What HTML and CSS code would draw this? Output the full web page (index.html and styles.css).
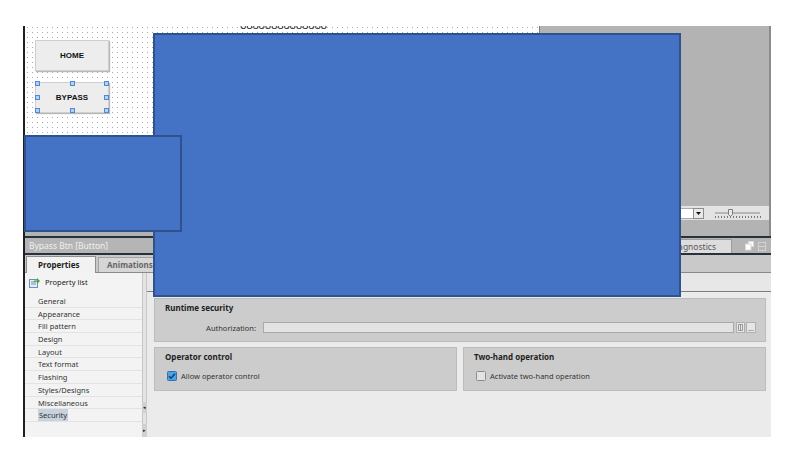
FILE: index.html
```html
<!DOCTYPE html>
<html lang="en">
<head>
    <meta charset="UTF-8">
    <meta name="viewport" content="width=device-width, initial-scale=1.0">
    <link rel="stylesheet" href="styles.css">
    <title>Bypass Btn [Button] - Properties</title>
</head>
<body>

    <div class="app">
        <div class="editor">
            <div class="canvas">
                <span class="cut-label">UUUUUUUUUUUUUU</span>
                <div class="hmi-btn">HOME</div>
                <div class="hmi-btn selected">BYPASS
                    <i class="handle h-tl"></i>
                    <i class="handle h-tm"></i>
                    <i class="handle h-tr"></i>
                    <i class="handle h-ml"></i>
                    <i class="handle h-mr"></i>
                    <i class="handle h-bl"></i>
                    <i class="handle h-bm"></i>
                    <i class="handle h-br"></i>
                </div>
            </div>
            <div class="viewport"></div>
        </div>

        <div class="statusbar">
            <div class="strip">
                <span class="zoom-box"></span>
                <span class="zoom-arrow">
                    <svg width="5" height="3" viewBox="0 0 5 3"><path d="M0 0h5L2.5 3z" fill="#111"/></svg>
                </span>
                <svg class="slider" width="48" height="11" viewBox="0 0 48 11">
                    <line x1="1" y1="5" x2="46" y2="5" stroke="#8a8a8a" stroke-width="1"/>
                    <g stroke="#777" stroke-width="1">
                        <line x1="1.5" y1="8" x2="1.5" y2="10"/><line x1="4.5" y1="8" x2="4.5" y2="10"/>
                        <line x1="7.5" y1="8" x2="7.5" y2="10"/><line x1="10.5" y1="8" x2="10.5" y2="10"/>
                        <line x1="13.5" y1="8" x2="13.5" y2="10"/><line x1="16.5" y1="8" x2="16.5" y2="10"/>
                        <line x1="19.5" y1="8" x2="19.5" y2="10"/><line x1="22.5" y1="8" x2="22.5" y2="10"/>
                        <line x1="25.5" y1="8" x2="25.5" y2="10"/><line x1="28.5" y1="8" x2="28.5" y2="10"/>
                        <line x1="31.5" y1="8" x2="31.5" y2="10"/><line x1="34.5" y1="8" x2="34.5" y2="10"/>
                        <line x1="37.5" y1="8" x2="37.5" y2="10"/><line x1="40.5" y1="8" x2="40.5" y2="10"/>
                        <line x1="43.5" y1="8" x2="43.5" y2="10"/><line x1="46.5" y1="8" x2="46.5" y2="10"/>
                    </g>
                    <path d="M14.5 1.5h4v5l-2 2l-2-2z" fill="#e9e9e9" stroke="#7a7a7a"/>
                </svg>
            </div>
        </div>

        <div class="inspector-head">
            <span class="head-title">Bypass Btn [Button]</span>
            <span class="diag-tab">Diagnostics</span>
            <svg class="win-icons" width="22" height="10" viewBox="0 0 22 10">
                <rect x="3.5" y="0.5" width="5" height="5" fill="#fff" stroke="#d8d8d8"/>
                <rect x="0.5" y="3" width="5.5" height="6" fill="#fff" stroke="#d8d8d8"/>
                <rect x="13.5" y="1.5" width="7" height="8" fill="none" stroke="#d2d2d2"/>
                <line x1="13.5" y1="5.5" x2="20.5" y2="5.5" stroke="#d2d2d2"/>
            </svg>
        </div>

        <div class="tabs">
            <span class="tab active">Properties</span>
            <span class="tab">Animations</span>
        </div>

        <div class="inspector">
            <div class="nav">
                <div class="proplist">
                    <svg width="11" height="11" viewBox="0 0 11 11">
                        <rect x="0.5" y="2.5" width="8" height="8" fill="#e8eef6" stroke="#6d8fb8"/>
                        <line x1="2" y1="5" x2="7" y2="5" stroke="#6d8fb8"/>
                        <line x1="2" y1="7" x2="7" y2="7" stroke="#6d8fb8"/>
                        <path d="M5 3.5h3V1l3 3l-3 3V4.8H5z" fill="#3aa53a"/>
                    </svg>
                    Property list
                </div>
                <ul class="nav-list">
                    <li>General</li>
                    <li>Appearance</li>
                    <li>Fill pattern</li>
                    <li>Design</li>
                    <li>Layout</li>
                    <li>Text format</li>
                    <li>Flashing</li>
                    <li>Styles/Designs</li>
                    <li>Miscellaneous</li>
                    <li><span class="current">Security</span></li>
                </ul>
            </div>

            <div class="splitter">
                <span class="grip grip-a">&#9666;</span>
                <span class="grip grip-b">&#9656;</span>
            </div>

            <div class="content">
                <div class="subbar"></div>
                <div class="groups">
                    <div class="group">
                        <div class="group-title">Runtime security</div>
                        <div class="auth-row">
                            <span class="auth-label">Authorization:</span>
                            <span class="auth-input"></span>
                            <span class="mini-btn">
                                <svg width="5" height="7" viewBox="0 0 5 7"><path d="M0.5 0.5h4v6h-4z M2.5 0.5v6" fill="none" stroke="#9a9a9a"/></svg>
                            </span>
                            <span class="mini-btn wide">...</span>
                        </div>
                    </div>

                    <div class="group-row">
                        <div class="group">
                            <div class="group-title">Operator control</div>
                            <label class="check-row">
                                <svg class="check" width="10" height="10" viewBox="0 0 10 10">
                                    <rect x="0.5" y="0.5" width="9" height="9" rx="1" fill="#4aa3ea" stroke="#3a6ea5"/>
                                    <path d="M2 5.2l2 2l4-4.4" fill="none" stroke="#17406e" stroke-width="1.6"/>
                                </svg>
                                Allow operator control
                            </label>
                        </div>
                        <div class="group">
                            <div class="group-title">Two-hand operation</div>
                            <label class="check-row">
                                <svg class="check" width="10" height="10" viewBox="0 0 10 10">
                                    <rect x="0.5" y="0.5" width="9" height="9" rx="1" fill="#e3e3e3" stroke="#8c8c8c"/>
                                </svg>
                                Activate two-hand operation
                            </label>
                        </div>
                    </div>
                </div>
            </div>
        </div>
    </div>

    <div class="shape shape-big"></div>
    <div class="shape shape-small"></div>

</body>
</html>
```

FILE: styles.css
```css
* {
    box-sizing: border-box;
}

body {
    margin: 0;
    background: #fff;
    font-family: "Noto Sans", "Liberation Sans", sans-serif;
    font-size: 8px;
    color: #222;
}

.app {
    margin: 26px 0 0 23px;
    width: 748px;
    height: 411px;
    border-left: 2px solid #1f1f1f;
    display: flex;
    flex-direction: column;
}

/* screen editor */
.editor {
    height: 180px;
    display: flex;
}

.canvas {
    width: 514px;
    position: relative;
    overflow: hidden;
    background-color: #fff;
    background-image: radial-gradient(circle, #a8a8a8 0.55px, transparent 0.85px);
    background-size: 5px 5px;
    background-position: 0 -1px;
    padding: 14px 0 0 10px;
}

.cut-label {
    position: absolute;
    left: 215px;
    top: -5px;
    font-family: "Liberation Sans", sans-serif;
    font-size: 9px;
    line-height: 10px;
    color: #111;
    letter-spacing: -0.3px;
}

.hmi-btn {
    position: relative;
    width: 74px;
    height: 31px;
    margin-bottom: 11px;
    background: #ededed;
    border: 1px solid #cfcfcf;
    box-shadow: 1px 1px 1px #b8b8b8;
    display: flex;
    align-items: center;
    justify-content: center;
    font-family: "Liberation Sans", sans-serif;
    font-weight: bold;
    font-size: 8px;
    color: #111;
}

.handle {
    position: absolute;
    width: 5px;
    height: 5px;
    background: #b4d0f2;
    border: 1px solid #4f89d6;
}

.h-tl { left: -1px; top: -2px; }
.h-tm { left: 34px; top: -2px; }
.h-tr { right: -1px; top: -2px; }
.h-ml { left: -1px; top: 12px; }
.h-mr { right: -1px; top: 12px; }
.h-bl { left: -1px; bottom: -1px; }
.h-bm { left: 34px; bottom: -1px; }
.h-br { right: -1px; bottom: -1px; }

.viewport {
    flex: 1;
    background: #b3b3b3;
    border-left: 1px solid #7f7f7f;
    border-right: 2px solid #8c8c8c;
}

.statusbar {
    height: 30px;
    background: #b3b3b3;
    border-right: 2px solid #8c8c8c;
}

.strip {
    height: 14px;
    background: #e3e3e3;
    display: flex;
    justify-content: flex-end;
    align-items: center;
    padding-right: 7px;
}

.zoom-box {
    width: 60px;
    height: 11px;
    background: #fff;
    border: 1px solid #a9a9a9;
    border-right: none;
}

.zoom-arrow {
    width: 11px;
    height: 11px;
    background: #e9e9e9;
    border: 1px solid #8d8d8d;
    display: flex;
    align-items: center;
    justify-content: center;
}

.slider {
    margin-left: 10px;
}

/* inspector window */
.inspector-head {
    height: 19px;
    background: #b5b5b5;
    border-top: 2px solid #28323e;
    border-bottom: 2px solid #28323e;
    display: flex;
    align-items: center;
    padding-left: 4px;
}

.head-title {
    color: #f0f0f0;
    font-size: 8.5px;
}

.diag-tab {
    margin-left: auto;
    align-self: flex-end;
    height: 14px;
    line-height: 13px;
    padding: 0 15px 0 16px;
    background: #dddddd;
    border: 1px solid #9c9c9c;
    border-bottom: none;
    color: #585858;
    font-size: 8.5px;
}

.win-icons {
    margin: 0 4px 0 13px;
}

.tabs {
    height: 18px;
    background: #c9c9c9;
    border-bottom: 1px solid #8a8a8a;
    display: flex;
    align-items: flex-end;
    padding-left: 1px;
}

.tab {
    height: 15px;
    line-height: 14px;
    margin-left: 2px;
    padding: 0 8px;
    background: #d6d6d6;
    border: 1px solid #a3a3a3;
    border-bottom: none;
    color: #666;
    font-weight: bold;
    font-size: 8px;
}

.tab.active {
    width: 70px;
    height: 17px;
    line-height: 16px;
    margin: 0 0 -1px 0;
    padding-left: 11px;
    background: #f2f2f2;
    border-color: #8f8f8f;
    color: #1e1e1e;
}

.inspector {
    flex: 1;
    display: flex;
    background: #ebebeb;
}

.nav {
    width: 117px;
    background: #f3f3f3;
}

.proplist {
    height: 18px;
    display: flex;
    align-items: center;
    gap: 5px;
    padding-left: 4px;
    font-size: 7.5px;
    color: #222;
}

.nav-list {
    list-style: none;
    margin: 4px 0 0 0;
    padding: 0;
}

.nav-list li {
    height: 12.7px;
    line-height: 12px;
    padding-left: 13px;
    border-bottom: 1px solid #e3e3e3;
    font-size: 7.5px;
    color: #333;
}

.nav-list .current {
    background: #c8d2dd;
    padding: 1px 1px;
}

.splitter {
    position: relative;
    width: 5px;
    background: #e4e4e4;
    border-left: 1px solid #c6c6c6;
    border-right: 1px solid #c6c6c6;
}

.grip {
    position: absolute;
    left: -1px;
    width: 5px;
    background: #d0d0d0;
    color: #222;
    font-size: 5px;
    line-height: 11px;
    text-align: center;
}

.grip-a { top: 129px; height: 11px; }
.grip-b { top: 151px; height: 13px; line-height: 13px; }

.content {
    flex: 1;
}

.subbar {
    height: 19px;
    background: #e7e7e7;
    border-bottom: 1px solid #7d7d7d;
}

.groups {
    padding: 6px 5px 0 7px;
}

.group {
    height: 44px;
    background: #cccccc;
    border: 1px solid #bcbcbc;
    padding: 3px 9px 0 10px;
}

.group-title {
    font-weight: bold;
    font-size: 8px;
    line-height: 11px;
    color: #1e1e1e;
}

.auth-row {
    display: flex;
    align-items: center;
    margin-top: 9px;
}

.auth-label {
    width: 91px;
    margin-right: 7px;
    text-align: right;
    font-size: 7.5px;
    color: #333;
}

.auth-input {
    flex: 1;
    height: 11px;
    background: #e3e3e3;
    border: 1px solid #a9a9a9;
}

.mini-btn {
    width: 9px;
    height: 11px;
    margin-left: 2px;
    background: #e6e6e6;
    border: 1px solid #b0b0b0;
    display: flex;
    align-items: center;
    justify-content: center;
    font-size: 7px;
    line-height: 6px;
    color: #555;
}

.mini-btn.wide {
    width: 10px;
    margin-left: 1px;
    align-items: flex-end;
}

.group-row {
    display: grid;
    grid-template-columns: 1fr 1fr;
    gap: 6px;
    margin-top: 5px;
}

.check-row {
    display: flex;
    align-items: center;
    gap: 4px;
    margin: 9px 0 0 2px;
    font-size: 7.5px;
    color: #333;
}

/* shapes drawn over the editor */
.shape {
    position: absolute;
    background: #4472c4;
    border: 2px solid #2f528f;
}

.shape-big {
    left: 153px;
    top: 33px;
    width: 528px;
    height: 264px;
}

.shape-small {
    left: 24px;
    top: 135px;
    width: 158px;
    height: 97px;
}
```
